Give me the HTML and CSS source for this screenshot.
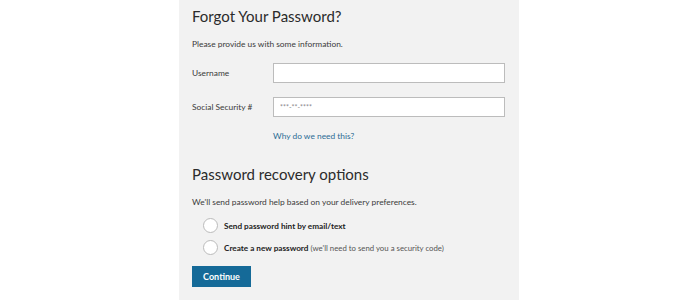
FILE: index.html
```html
<!DOCTYPE html>
<html>
<head>
<meta charset="utf-8">
<link rel="stylesheet" href="styles.css">
</head>
<body>
<div class="panel">
  <h1 class="title">Forgot Your Password?</h1>
  <p class="intro">Please provide us with some information.</p>
  <div class="field">
    <label class="label">Username</label>
    <input class="input" type="text">
  </div>
  <div class="field">
    <label class="label">Social Security #</label>
    <input class="input" type="text" placeholder="***-**-****">
  </div>
  <div class="help"><a class="link" href="#">Why do we need this?</a></div>
  <h2 class="title title2">Password recovery options</h2>
  <p class="intro intro2">We'll send password help based on your delivery preferences.</p>
  <div class="options">
    <label class="option"><span class="radio"></span><span class="opt-text"><b>Send password hint by email/text</b></span></label>
    <label class="option"><span class="radio"></span><span class="opt-text"><b>Create a new password</b> <span class="note">(we'll need to send you a security code)</span></span></label>
  </div>
  <button class="btn">Continue</button>
</div>
</body>
</html>
```
FILE: styles.css
```css
html, body {
  margin: 0;
  padding: 0;
  background: #ffffff;
}
body {
  font-family: Lato, "Open Sans", sans-serif;
  color: #333333;
}
.panel {
  margin-left: 179px;
  width: 340px;
  height: 300px;
  box-sizing: border-box;
  background: #f2f2f2;
  padding: 6px 13px 0 13px;
  display: flex;
  flex-direction: column;
}
.title {
  margin: 0;
  font-size: 15px;
  font-weight: 400;
  line-height: 20px;
  color: #2b2b2b;
}
.intro {
  margin: 12px 0 0 0;
  font-size: 8.4px;
  line-height: 12px;
  color: #3a3a3a;
}
.field {
  display: flex;
  align-items: center;
  margin-top: 13px;
}
.field + .field {
  margin-top: 14px;
}
.label {
  width: 81px;
  font-size: 8.4px;
  color: #3a3a3a;
}
.input {
  width: 232px;
  height: 20px;
  box-sizing: border-box;
  border: 1px solid #bcbcbc;
  background: #fff;
  margin: 0;
  padding: 0 6px;
  font-family: Lato, sans-serif;
  font-size: 7px;
}
.input::placeholder {
  color: #8a8a8a;
}
.help {
  margin-top: 13px;
  padding-left: 81px;
  font-size: 8.4px;
  line-height: 12px;
}
.link {
  color: #2c6c95;
  text-decoration: none;
}
.title2 {
  margin-top: 22px;
}
.intro2 {
  margin-top: 12px;
}
.options {
  display: flex;
  flex-direction: column;
  gap: 7px;
  margin-top: 10px;
  padding-left: 11px;
}
.option {
  display: flex;
  align-items: center;
  height: 15px;
  font-size: 8.2px;
  color: #222;
}
.radio {
  width: 15px;
  height: 15px;
  box-sizing: border-box;
  border: 1px solid #bbb;
  border-radius: 50%;
  background: #fff;
  margin-right: 6px;
  flex: none;
}
.note {
  color: #555;
  font-size: 7.8px;
}
.btn {
  align-self: flex-start;
  margin-top: 11px;
  width: 59px;
  height: 21px;
  border: none;
  background: #156a98;
  color: #fff;
  font-family: Lato, sans-serif;
  font-weight: 700;
  font-size: 9px;
  padding: 0;
}
```
